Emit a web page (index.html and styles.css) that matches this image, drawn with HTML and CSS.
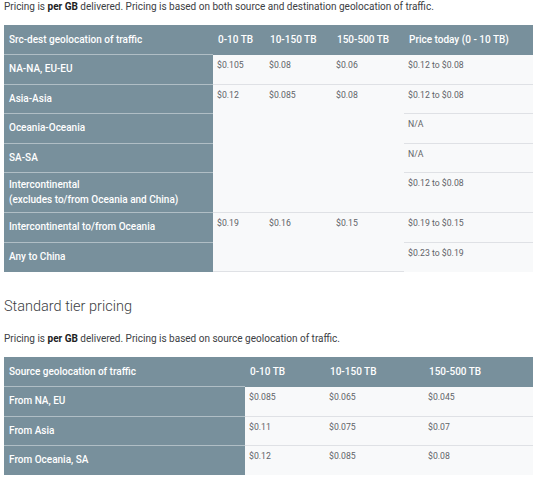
FILE: index.html
```html
<!DOCTYPE html>
<html>
<head>
<meta charset="utf-8">
<link rel="stylesheet" href="styles.css">
</head>
<body>
<div class="page">
  <p class="intro">Pricing is <b>per GB</b> delivered. Pricing is based on both source and destination geolocation of traffic.</p>
  <table class="price t1">
    <colgroup><col class="c1"><col class="c2"><col class="c3"><col class="c4"><col class="c5"></colgroup>
    <thead>
      <tr><th>Src-dest geolocation of traffic</th><th>0-10 TB</th><th>10-150 TB</th><th>150-500 TB</th><th>Price today (0 - 10 TB)</th></tr>
    </thead>
    <tbody>
      <tr><th>NA-NA, EU-EU</th><td>$0.105</td><td>$0.08</td><td>$0.06</td><td>$0.12 to $0.08</td></tr>
      <tr><th>Asia-Asia</th><td rowspan="4">$0.12</td><td rowspan="4">$0.085</td><td rowspan="4">$0.08</td><td>$0.12 to $0.08</td></tr>
      <tr><th>Oceania-Oceania</th><td>N/A</td></tr>
      <tr><th>SA-SA</th><td>N/A</td></tr>
      <tr><th>Intercontinental<br>(excludes to/from Oceania and China)</th><td>$0.12 to $0.08</td></tr>
      <tr><th>Intercontinental to/from Oceania</th><td rowspan="2">$0.19</td><td rowspan="2">$0.16</td><td rowspan="2">$0.15</td><td>$0.19 to $0.15</td></tr>
      <tr><th>Any to China</th><td>$0.23 to $0.19</td></tr>
    </tbody>
  </table>

  <h2 class="heading">Standard tier pricing</h2>
  <p class="intro second">Pricing is <b>per GB</b> delivered. Pricing is based on source geolocation of traffic.</p>
  <table class="price t2">
    <colgroup><col class="d1"><col class="d2"><col class="d3"><col class="d4"></colgroup>
    <thead>
      <tr><th>Source geolocation of traffic</th><th>0-10 TB</th><th>10-150 TB</th><th>150-500 TB</th></tr>
    </thead>
    <tbody>
      <tr><th>From NA, EU</th><td>$0.085</td><td>$0.065</td><td>$0.045</td></tr>
      <tr><th>From Asia</th><td>$0.11</td><td>$0.075</td><td>$0.07</td></tr>
      <tr><th>From Oceania, SA</th><td>$0.12</td><td>$0.085</td><td>$0.08</td></tr>
    </tbody>
  </table>
</div>
</body>
</html>
```
FILE: styles.css
```css
html, body {
  margin: 0;
  padding: 0;
  background: #ffffff;
}
.page {
  padding: 0 7px 0 4px;
  font-family: Roboto, "Noto Sans", sans-serif;
  color: #3c4043;
}
.intro {
  margin: 0;
  font-size: 10px;
  line-height: 14px;
}
.intro b {
  font-weight: 700;
  color: #202124;
}
.price {
  width: 529px;
  border-collapse: collapse;
  table-layout: fixed;
}
.t1 {
  margin-top: 11px;
}
.c1 { width: 209px; }
.c2 { width: 52px; }
.c3 { width: 67px; }
.c4 { width: 72px; }
.c5 { width: 129px; }
.d1 { width: 241px; }
.d2 { width: 80px; }
.d3 { width: 99px; }
.d4 { width: 109px; }
.price tr {
  height: 29.5px;
}
.price thead th {
  background: #78909c;
  color: #ffffff;
  font-weight: 500;
  font-size: 10px;
  line-height: 14px;
  text-align: left;
  padding: 5px 5px;
  vertical-align: middle;
}
.price thead th:first-child {
  border-bottom: 1px solid #b0bec5;
}
.price tbody th {
  background: #78909c;
  color: #ffffff;
  font-weight: 500;
  font-size: 10px;
  line-height: 14.5px;
  text-align: left;
  padding: 5px 5px;
  vertical-align: middle;
  border-bottom: 1px solid #b0bec5;
}
.price tbody tr:last-child th {
  border-bottom: none;
}
.price td {
  background: #f8f9fa;
  color: #5f6368;
  font-size: 8.7px;
  line-height: 12px;
  padding: 4px 5px 4px 4px;
  vertical-align: top;
  border-bottom: 1px solid #dfe1e5;
}
.price tbody tr:last-child td {
  border-bottom: none;
}
.heading {
  margin: 25px 0 0;
  font-size: 14.5px;
  font-weight: 300;
  line-height: 20px;
  color: #3c4043;
}
.second {
  margin-top: 15px;
}
.t2 {
  margin-top: 11px;
}
```
